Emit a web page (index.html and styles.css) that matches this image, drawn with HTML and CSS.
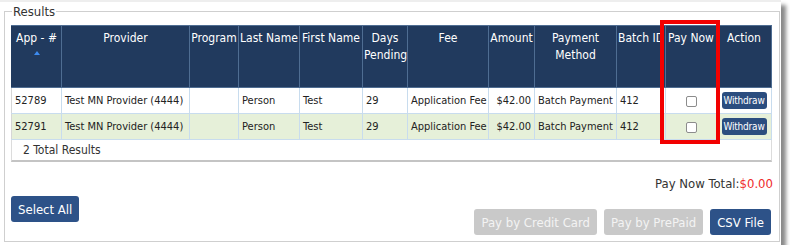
FILE: index.html
```html
<!DOCTYPE html>
<html lang="en-US">
  <head>
    <meta charset="utf-8"/>
    <title>Results</title>
    <link rel="stylesheet" href="styles.css">
  </head>

  <body>
    <div class="screen">
      <fieldset class="results">
        <legend>Results</legend>

        <div class="grid-wrap">
          <table class="grid">
            <colgroup>
              <col style="width:50px">
              <col style="width:128px">
              <col style="width:49px">
              <col style="width:61px">
              <col style="width:63px">
              <col style="width:45px">
              <col style="width:81px">
              <col style="width:46px">
              <col style="width:82px">
              <col style="width:49px">
              <col style="width:51px">
              <col style="width:55px">
            </colgroup>
            <thead>
              <tr>
                <th>App - #<span class="sort-up"></span></th>
                <th>Provider</th>
                <th>Program</th>
                <th>Last Name</th>
                <th>First Name</th>
                <th>Days Pending</th>
                <th>Fee</th>
                <th>Amount</th>
                <th>Payment Method</th>
                <th>Batch ID</th>
                <th>Pay Now</th>
                <th>Action</th>
              </tr>
            </thead>
            <tbody>
              <tr>
                <td>52789</td>
                <td>Test MN Provider (4444)</td>
                <td></td>
                <td>Person</td>
                <td>Test</td>
                <td>29</td>
                <td>Application Fee</td>
                <td class="num">$42.00</td>
                <td>Batch Payment</td>
                <td>412</td>
                <td class="center"><input type="checkbox" class="pay-check"></td>
                <td class="center"><button class="btn-small">Withdraw</button></td>
              </tr>
              <tr class="alt">
                <td>52791</td>
                <td>Test MN Provider (4444)</td>
                <td></td>
                <td>Person</td>
                <td>Test</td>
                <td>29</td>
                <td>Application Fee</td>
                <td class="num">$42.00</td>
                <td>Batch Payment</td>
                <td>412</td>
                <td class="center"><input type="checkbox" class="pay-check"></td>
                <td class="center"><button class="btn-small">Withdraw</button></td>
              </tr>
            </tbody>
          </table>
          <div class="grid-footer">2 Total Results</div>

          <!-- highlight drawn over the Pay Now column -->
          <div class="highlight"></div>
        </div>

        <div class="total">Pay Now Total:<span class="total-amount">$0.00</span></div>

        <div class="actions">
          <button class="btn">Select All</button>
          <div class="actions-right">
            <button class="btn" disabled>Pay by Credit Card</button>
            <button class="btn" disabled>Pay by PrePaid</button>
            <button class="btn">CSV File</button>
          </div>
        </div>
      </fieldset>
    </div>
  </body>

</html>
```

FILE: styles.css
```css
* {
  box-sizing: border-box;
}

body {
  margin: 0;
  background-color: #fff;
  color: #222;
  font-family: "DejaVu Sans Condensed", "DejaVu Sans", sans-serif;
  font-stretch: condensed;
}

.screen {
  width: 781px;
  height: 245px;
  padding: 2px 0 0 4px;
  background-color: #fff;
  border-top: 2px solid #eeeeee;
  box-shadow: 5px 5px 4px #8a8a8a;
}

.results {
  width: 776px;
  margin: 0;
  padding: 6px 6px 6px 6px;
  border: 1px solid #cfcfcf;
}

.results legend {
  padding: 0 1px;
  margin-left: 1px;
  font-size: 13px;
  color: #333;
}

.grid-wrap {
  position: relative;
  width: 761px;
}

.grid {
  width: 761px;
  table-layout: fixed;
  border-collapse: collapse;
  font-size: 11px;
}

.grid th {
  height: 62px;
  padding: 4px 1px 0;
  vertical-align: top;
  text-align: center;
  font-weight: normal;
  font-size: 12px;
  line-height: 17px;
  color: #fff;
  background-color: #213a5e;
  border: 1px solid #4f6d92;
  white-space: normal;
}

.grid th:first-child {
  border-left-color: #213a5e;
}

.sort-up {
  display: block;
  width: 0;
  height: 0;
  margin: 4px auto 0;
  border-left: 3px solid transparent;
  border-right: 3px solid transparent;
  border-bottom: 4px solid #3d8bf0;
}

.grid td {
  height: 26px;
  padding: 0 3px;
  border: 1px solid #c8dcee;
  white-space: nowrap;
  overflow: hidden;
}

.grid td:first-child {
  border-left-color: #d6d6d6;
}

.grid tr.alt td {
  background-color: #e6f0d9;
}

.grid td.num {
  text-align: right;
}

.grid td.center {
  text-align: center;
  padding: 0;
}

.pay-check {
  width: 11px;
  height: 11px;
  margin: 0;
  vertical-align: middle;
  appearance: none;
  border: 1px solid #8c8c8c;
  border-radius: 2px;
  background-color: #fff;
}

.btn-small {
  width: 45px;
  height: 17px;
  padding: 0;
  border: none;
  border-radius: 3px;
  background-color: #2b4d7f;
  color: #fff;
  font-family: inherit;
  font-size: 10px;
  letter-spacing: -0.2px;
  vertical-align: middle;
}

.grid-footer {
  height: 22px;
  padding: 3px 11px;
  font-size: 12px;
  color: #333;
  border: 1px solid #dcdcdc;
  border-top: none;
  border-bottom: 2px solid #c4c4c4;
}

.highlight {
  position: absolute;
  left: 649px;
  top: -5px;
  width: 60px;
  height: 124px;
  border: 4px solid #f20000;
}

.total {
  margin-top: 14px;
  text-align: right;
  font-size: 13px;
  color: #333;
}

.total-amount {
  color: #ef2b2b;
}

.actions {
  display: flex;
  justify-content: space-between;
  align-items: flex-start;
  margin-top: 5px;
}

.actions-right {
  display: flex;
  gap: 7px;
  margin-top: 13px;
  margin-right: 2px;
}

.btn {
  height: 26px;
  padding: 0 7px;
  border: none;
  border-radius: 3px;
  background-color: #2d5288;
  color: #fff;
  font-family: inherit;
  font-size: 13px;
}

.btn:disabled {
  background-color: #c9c9c9;
  color: #f3f3f3;
}
```
